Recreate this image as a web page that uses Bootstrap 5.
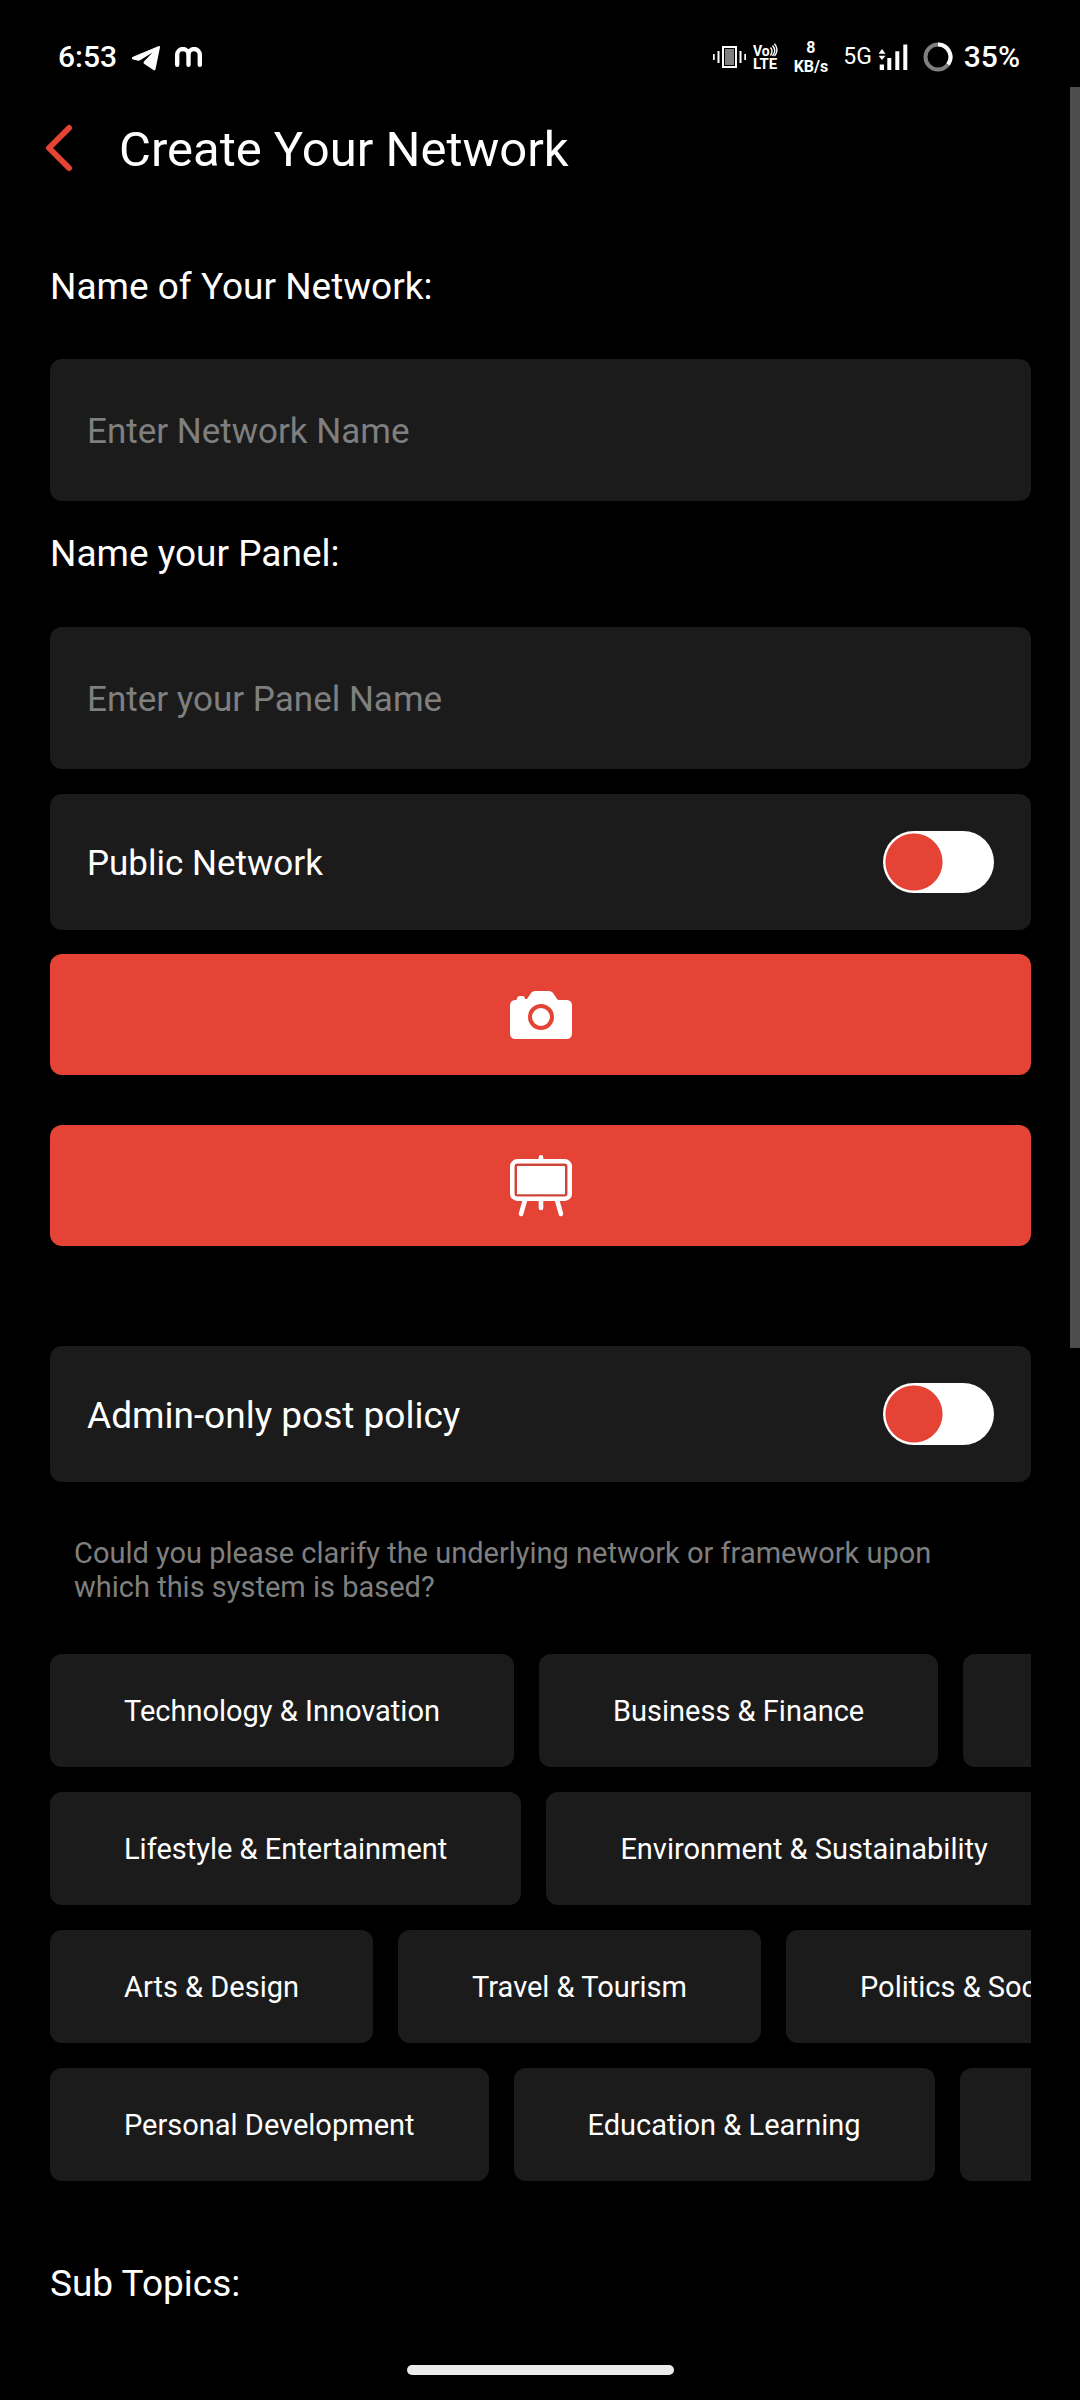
<!DOCTYPE html>
<html lang="en">
<head>
<meta charset="utf-8">
<meta name="viewport" content="width=device-width, initial-scale=1">
<title>Create Your Network</title>
<link href="https://cdn.jsdelivr.net/npm/bootstrap@5.3.0/dist/css/bootstrap.min.css" rel="stylesheet">
<style>
  body { background: #000; color: #fff; font-family: Roboto, "Liberation Sans", sans-serif; font-size: 37px; line-height: 43px; }
  .statusbar { height: 87px; padding: 26px 60px 0 58px; font-size: 30px; line-height: 36px; font-weight: 500; }
  .status-group { height: 62px; gap: 15px; }
  .status-pair { gap: 7px; }
  .net-speed { font-size: 16px; line-height: 19px; font-weight: 700; }
  .net-type { font-size: 23px; font-weight: 400; }
  .battery-pair { gap: 11px; }
  .app-header { padding: 34px 45px 0; gap: 46px; }
  .app-header h1 { font-size: 49px; line-height: 58px; font-weight: 400; }
  .back-link { line-height: 0; padding-bottom: 4px; }
  .page-form { padding: 86px 49px 0 50px; }
  .field-label { margin-bottom: 51px; }
  .panel-label { margin-top: 31px; margin-bottom: 52px; }
  .text-field, .text-field:focus { height: 142px; padding: 2px 37px 0; border: 0; border-radius: 12px; background: #1b1b1b; color: #fff; font-size: 35px; box-shadow: none; }
  .text-field::placeholder { color: #7f7f7f; opacity: 1; }
  .switch-row { height: 136px; padding: 0 37px; border-radius: 12px; background: #1b1b1b; }
  .switch-small { font-size: 35px; }
  .switch-row label { padding-top: 2px; }
  .form-switch .form-check-input.toggle { width: 111px; height: 62px; margin: 0; border: 0; border-radius: 31px; background: #fff radial-gradient(circle at 31px 31px, #e44336 28px, transparent 29px) no-repeat; }
  .btn-media { height: 121px; padding: 0; border: 0; border-radius: 12px; background: #e44336; line-height: 0; }
  .btn-media:hover { background: #d13a2e; }
  .gap-field { margin-top: 25px; }
  .gap-small { margin-top: 24px; }
  .gap-medium { margin-top: 50px; }
  .gap-large { margin-top: 100px; }
  .hint { margin: 54px 50px 50px 24px; font-size: 29px; line-height: 34px; color: #7f7f7f; }
  .topic-rows, .topic-row { gap: 25px; }
  .btn-topic { height: 113px; padding: 3px 74px 0; border: 0; border-radius: 12px; background: #1b1b1b; color: #fff; font-size: 29px; flex: none; }
  .btn-topic:hover { background: #2a2a2a; color: #fff; }
  .btn-more { width: 400px; }
  .sub-heading { margin-top: 81px; font-size: 37px; line-height: 43px; font-weight: 400; }
  .home-bar { width: 267px; height: 10px; border-radius: 5px; background: #ebebeb; margin-bottom: 25px; }
  .scroll-thumb { position: absolute; top: 87px; right: 0; width: 10px; height: 1261px; background: #4d4d4d; }
</style>
</head>
<body class="d-flex flex-column min-vh-100 position-relative">
  <div class="statusbar d-flex justify-content-between">
    <div class="status-group d-flex align-items-center">
      <span>6:53</span>
      <svg width="28" height="32" viewBox="0 -5 28 32" fill="#fff"><path d="M26.800 .1 1 10.800c-1.500.8-1.300 2.300 0 2.700l5.200 1.200c.7.100 1.300 0 1.900-.4L20.500 6.500 12 15.600c-.7.900-.6 1.800.4 2.500l9 6c1 .6 1.900.2 2.100-.9L28 1.200c.1-.9-.5-1.400-1.200-1.100z"/></svg>
      <svg width="27" height="20" viewBox="0 0 27 20" fill="none" stroke="#fff" stroke-width="4.400" stroke-linecap="round"><path d="M2.200 17.800V7.700a5.600 5.600 0 0 1 11.300 0V17.800M13.500 7.700a5.600 5.600 0 0 1 11.300 0V17.800"/></svg>
    </div>
    <div class="status-group d-flex align-items-center">
      <div class="status-pair d-flex align-items-center">
        <svg width="33" height="24" viewBox="0 0 33 24" fill="#fff"><rect x="12" y="4" width="9" height="16" fill="#808080"/><rect x="10" y="2" width="13" height="20" fill="none" stroke="#fff" stroke-width="2"/><path d="M0 9h1.700v6H0zM4.500 6h2v12h-2zM26.500 6h2v12h-2zM31.300 9H33v6h-1.700z"/></svg>
        <svg width="26" height="28" viewBox="0 0 26 28" fill="#fff" font-family="Roboto, sans-serif" font-weight="700"><text x="0" y="13" font-size="14">Vo</text><text x="0" y="26" font-size="15">LTE</text><path d="M17.500 4.500q3 3.500 0 8M19.500 2.500q4.500 5 0 10.500M21.500 .8q5 6 0 12.200" fill="none" stroke="#fff" stroke-width="1.400"/></svg>
      </div>
      <div class="net-speed text-center">8<br>KB/s</div>
      <div class="status-pair d-flex align-items-center">
        <span class="net-type">5G</span>
        <svg width="29" height="26" viewBox="0 0 29 26" fill="#fff"><path d="M3 5l3.500 4.700h-7zM3 16l3.500-4.300h-7zM.7 20.500H5V26H.7zM8.300 14h4v12h-4zM16.300 7.300h4V26h-4zM24.300 .6h4V26h-4z"/></svg>
      </div>
      <div class="battery-pair d-flex align-items-center">
        <svg width="30" height="30" viewBox="0 0 30 30" fill="none" stroke-width="4"><circle cx="15" cy="15" r="12.500" stroke="#808080"/><path d="M15 2.500A12.500 12.500 0 0 1 25.100 22.300" stroke="#fff"/></svg>
        <span>35%</span>
      </div>
    </div>
  </div>
  <header class="app-header d-flex align-items-center">
    <a href="#" class="back-link" aria-label="Back"><svg width="28" height="48" viewBox="0 0 28 48" fill="none" stroke="#e44336" stroke-width="6" stroke-linecap="round" stroke-linejoin="round"><path d="M24 4 4 24l20 20"/></svg></a>
    <h1 class="mb-0">Create Your Network</h1>
  </header>
  <main>
    <form class="page-form">
      <label class="field-label d-block" for="networkName">Name of Your Network:</label>
      <input class="form-control text-field" id="networkName" type="text" placeholder="Enter Network Name">
      <label class="field-label panel-label d-block" for="panelName">Name your Panel:</label>
      <input class="form-control text-field" id="panelName" type="text" placeholder="Enter your Panel Name">
      <div class="form-switch switch-row switch-small gap-field d-flex align-items-center justify-content-between">
        <label for="publicNetwork">Public Network</label>
        <input class="form-check-input toggle" type="checkbox" role="switch" id="publicNetwork">
      </div>
      <button type="button" class="btn btn-media w-100 gap-small d-flex align-items-center justify-content-center" aria-label="Add photo">
        <svg width="62" height="48" viewBox="0 0 62 48" fill="#fff"><path d="M7 8c0-2 1-3 3-3h2c2 0 3 1 3 3h2l4-6c1-1 2-2 4-2h14c2 0 3 1 4 2l4 6c1 1 2 1 3 1h6c4 0 6 2 6 6v27c0 4-2 6-6 6H6c-4 0-6-2-6-6V15c0-4 2-6 6-6z"/><circle cx="31" cy="26" r="11" stroke="#e44336" stroke-width="4"/></svg>
      </button>
      <button type="button" class="btn btn-media w-100 gap-medium d-flex align-items-center justify-content-center" aria-label="Add board">
        <svg width="62" height="62" viewBox="0 0 62 62" fill="none" stroke="#fff" stroke-width="4.600" stroke-linecap="round"><rect x="2.300" y="6.300" width="57.400" height="37.400" rx="5"/><path d="M31 2.300V6M31 44v9M15 45l-4 14M47 45l4 14"/><rect x="7" y="11" width="48" height="29" rx="1" fill="#fff" stroke="none"/><rect x="5.800" y="9.800" width="50.400" height="30.400" rx="1" stroke="#c8463c" stroke-width="1.800"/></svg>
      </button>
      <div class="form-switch switch-row gap-large d-flex align-items-center justify-content-between">
        <label for="adminOnly">Admin-only post policy</label>
        <input class="form-check-input toggle" type="checkbox" role="switch" id="adminOnly">
      </div>
      <p class="hint">Could you please clarify the underlying network or framework upon which this system is based?</p>
      <div class="topic-rows d-flex flex-column">
        <div class="topic-row d-flex overflow-hidden"><button type="button" class="btn btn-topic">Technology &amp; Innovation</button><button type="button" class="btn btn-topic">Business &amp; Finance</button><button type="button" class="btn btn-topic btn-more" aria-label="More topics"></button></div>
        <div class="topic-row d-flex overflow-hidden"><button type="button" class="btn btn-topic">Lifestyle &amp; Entertainment</button><button type="button" class="btn btn-topic">Environment &amp; Sustainability</button></div>
        <div class="topic-row d-flex overflow-hidden"><button type="button" class="btn btn-topic">Arts &amp; Design</button><button type="button" class="btn btn-topic">Travel &amp; Tourism</button><button type="button" class="btn btn-topic">Politics &amp; Society</button></div>
        <div class="topic-row d-flex overflow-hidden"><button type="button" class="btn btn-topic">Personal Development</button><button type="button" class="btn btn-topic">Education &amp; Learning</button><button type="button" class="btn btn-topic btn-more" aria-label="More topics"></button></div>
      </div>
      <h2 class="sub-heading mb-0">Sub Topics:</h2>
    </form>
  </main>
  <div class="home-bar mx-auto mt-auto"></div>
  <div class="scroll-thumb"></div>
<script src="https://cdn.jsdelivr.net/npm/bootstrap@5.3.0/dist/js/bootstrap.bundle.min.js"></script>
</body>
</html>
